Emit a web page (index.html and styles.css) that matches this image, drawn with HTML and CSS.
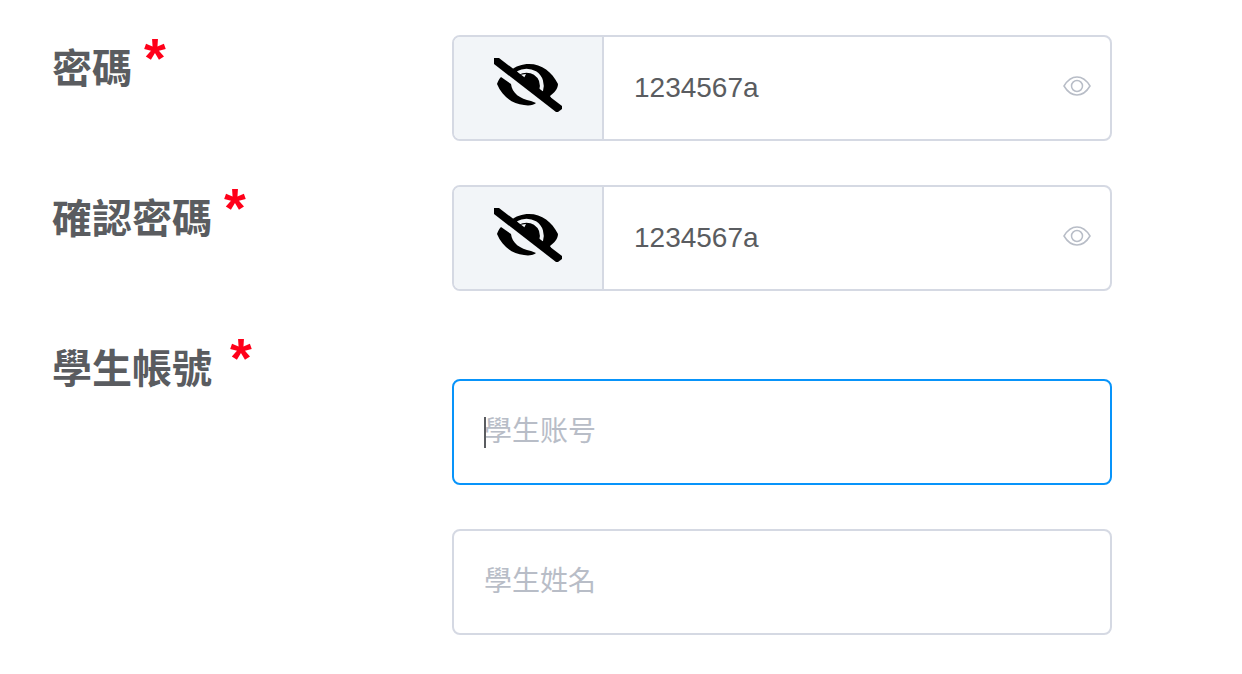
FILE: index.html
```html
<!DOCTYPE html>
<html lang="zh-Hant">
<head>
    <meta charset="UTF-8">
    <meta name="viewport" content="width=device-width, initial-scale=1.0">
    <title>學生帳號</title>
    <link rel="stylesheet" href="styles.css">
</head>
<body>
    <svg class="icon-defs" aria-hidden="true">
        <symbol id="icon-hidden" viewBox="0 0 68 54">
            <path d="M16 13C22 8 28 6 35 6C48 6 58 14 64 26C64 31 60 35 56 38L60 46Z"/>
            <path d="M7 19L17 26C18 35 26 41 37 43L42 45C40 47 35 48 30 47C18 46 8 38 3 26C4 23 5 21 7 19Z"/>
            <path class="icon-gap" d="M24 15C29 12 36 12 41 15C47 19 49 26 47 33"/>
            <path class="icon-notch" d="M25 17L32 16L30 20L32 24Z"/>
            <path class="icon-slash" d="M0 0H5L68 48V51L64 54H62L0 6Z"/>
        </symbol>
        <symbol id="icon-view" viewBox="0 0 28 20">
            <path d="M1 10C4 5 8 1 14 1S24 5 27 10C24 15 20 19 14 19S4 15 1 10Z"/>
            <circle cx="14" cy="10" r="5.5"/>
        </symbol>
    </svg>

    <form class="account-form">
        <div class="form-row">
            <label class="form-label" for="password">密碼 <span class="required">*</span></label>
            <div class="input-group">
                <button type="button" class="prepend" aria-label="隱藏密碼">
                    <svg class="icon-hidden"><use href="#icon-hidden"/></svg>
                </button>
                <input type="text" id="password" name="password" value="1234567a">
                <button type="button" class="view-btn" aria-label="顯示密碼">
                    <svg class="icon-view"><use href="#icon-view"/></svg>
                </button>
            </div>
        </div>

        <div class="form-row">
            <label class="form-label" for="confirmPassword">確認密碼 <span class="required">*</span></label>
            <div class="input-group">
                <button type="button" class="prepend" aria-label="隱藏密碼">
                    <svg class="icon-hidden"><use href="#icon-hidden"/></svg>
                </button>
                <input type="text" id="confirmPassword" name="confirmPassword" value="1234567a">
                <button type="button" class="view-btn" aria-label="顯示密碼">
                    <svg class="icon-view"><use href="#icon-view"/></svg>
                </button>
            </div>
        </div>

        <div class="form-row">
            <label class="form-label wide-gap" for="studentAccount">學生帳號 <span class="required">*</span></label>
            <div class="student-fields">
                <div class="input-group active">
                    <span class="caret"></span>
                    <input type="text" id="studentAccount" name="studentAccount" placeholder="學生账号">
                </div>
                <div class="input-group">
                    <input type="text" name="studentName" placeholder="學生姓名" aria-label="學生姓名">
                </div>
            </div>
        </div>
    </form>
</body>
</html>
```
FILE: styles.css
```css
* {
    box-sizing: border-box;
}

body {
    margin: 0;
    background-color: #fff;
    color: #5a5c60;
    font-family: "Liberation Sans", "Noto Sans CJK TC", sans-serif;
}

.icon-defs {
    position: absolute;
    width: 0;
    height: 0;
}

.account-form {
    display: flex;
    flex-direction: column;
    gap: 44px;
    padding: 35px 130px 35px 52px;
}

/* label on the left, fields fill the rest */
.form-row {
    display: grid;
    grid-template-columns: 400px 1fr;
    align-items: start;
}

.form-label {
    display: flex;
    gap: 12px;
    font-family: "Noto Sans CJK TC", sans-serif;
    font-size: 40px;
    font-weight: bold;
    line-height: 62px;
}

.form-label.wide-gap {
    gap: 18px;
}

.required {
    color: #ff0019;
    font-family: "Liberation Sans", sans-serif;
    font-size: 56px;
    line-height: 46px;
}

.input-group {
    position: relative;
    display: flex;
    height: 106px;
    border: 2px solid #d5d9e3;
    border-radius: 8px;
    overflow: hidden;
}

.input-group.active {
    border-color: #0894fa;
}

.input-group input {
    flex: 1;
    min-width: 0;
    padding: 0 30px;
    border: none;
    outline: none;
    background: none;
    color: #5a5c60;
    font-family: inherit;
    font-size: 28px;
}

.input-group input::placeholder {
    color: #b8bdc7;
    opacity: 1;
}

.prepend {
    width: 150px;
    padding: 0 0 6px;
    border: none;
    border-right: 2px solid #d5d9e3;
    background-color: #f2f5f8;
}

.view-btn {
    padding: 0 19px 4px 0;
    border: none;
    background: none;
}

.icon-hidden,
.icon-view {
    display: block;
    margin: 0 auto;
}

.icon-hidden {
    width: 68px;
    height: 54px;
    fill: #000;
}

.icon-gap {
    fill: none;
    stroke: #f2f5f8;
    stroke-width: 4;
}

.icon-notch {
    fill: #f2f5f8;
}

.icon-view {
    width: 28px;
    height: 20px;
    fill: none;
    stroke: #b8bdc7;
    stroke-width: 1.5;
}

.student-fields {
    display: flex;
    flex-direction: column;
    gap: 44px;
    padding-top: 44px;
}

.caret {
    position: absolute;
    top: 36px;
    left: 30px;
    width: 2px;
    height: 31px;
    background-color: #5a5c60;
}
```
